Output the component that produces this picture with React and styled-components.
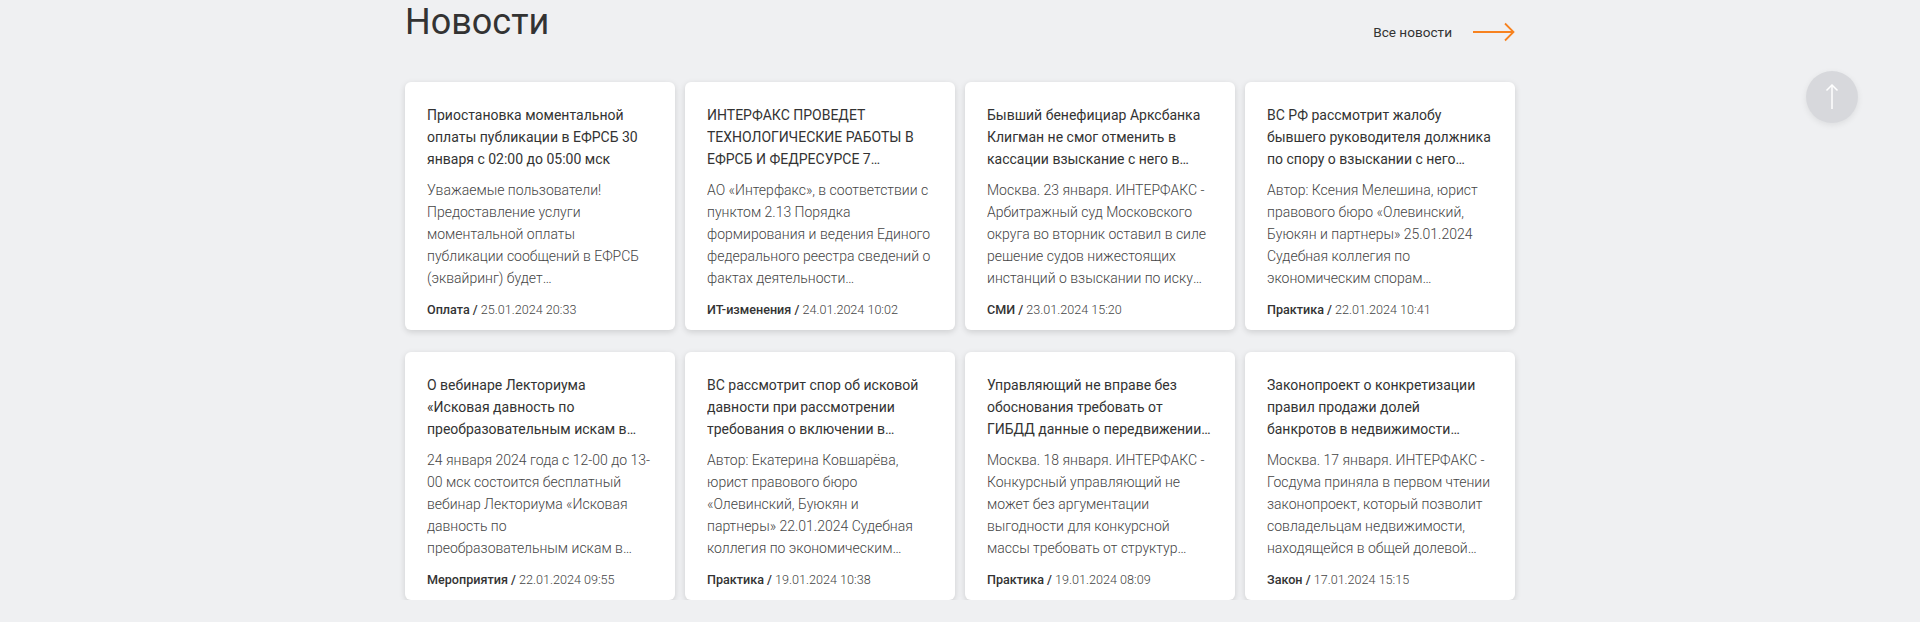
import styled, { createGlobalStyle } from "styled-components";

const news = [
  {
    title:
      "Приостановка моментальной оплаты публикации в ЕФРСБ 30 января с 02:00 до 05:00 мск",
    text: "Уважаемые пользователи! Предоставление услуги моментальной оплаты публикации сообщений в ЕФРСБ (эквайринг) будет приостановлено на время проведения технических работ.",
    tag: "Оплата",
    date: "25.01.2024 20:33",
  },
  {
    title:
      "ИНТЕРФАКС ПРОВЕДЕТ ТЕХНОЛОГИЧЕСКИЕ РАБОТЫ В ЕФРСБ И ФЕДРЕСУРСЕ 7 ФЕВРАЛЯ",
    text: "АО «Интерфакс», в соответствии с пунктом 2.13 Порядка формирования и ведения Единого федерального реестра сведений о фактах деятельности юридических лиц, уведомляет о проведении работ.",
    tag: "ИТ-изменения",
    date: "24.01.2024 10:02",
  },
  {
    title:
      "Бывший бенефициар Арксбанка Клигман не смог отменить в кассации взыскание с него в пользу банка",
    text: "Москва. 23 января. ИНТЕРФАКС - Арбитражный суд Московского округа во вторник оставил в силе решение судов нижестоящих инстанций о взыскании по иску конкурсного управляющего.",
    tag: "СМИ",
    date: "23.01.2024 15:20",
  },
  {
    title:
      "ВС РФ рассмотрит жалобу бывшего руководителя должника по спору о взыскании с него убытков",
    text: "Автор: Ксения Мелешина, юрист правового бюро «Олевинский, Буюкян и партнеры» 25.01.2024 Судебная коллегия по экономическим спорам Верховного Суда РФ рассмотрит жалобу.",
    tag: "Практика",
    date: "22.01.2024 10:41",
  },
  {
    title:
      "О вебинаре Лекториума «Исковая давность по преобразовательным искам в деле о банкротстве»",
    text: "24 января 2024 года с 12-00 до 13-00 мск состоится бесплатный вебинар Лекториума «Исковая давность по преобразовательным искам в деле о банкротстве».",
    tag: "Мероприятия",
    date: "22.01.2024 09:55",
  },
  {
    title:
      "ВС рассмотрит спор об исковой давности при рассмотрении требования о включении в реестр",
    text: "Автор: Екатерина Ковшарёва, юрист правового бюро «Олевинский, Буюкян и партнеры» 22.01.2024 Судебная коллегия по экономическим спорам Верховного Суда РФ рассмотрит спор.",
    tag: "Практика",
    date: "19.01.2024 10:38",
  },
  {
    title:
      "Управляющий не вправе без обоснования требовать от ГИБДД данные о передвижении автомобилей",
    text: "Москва. 18 января. ИНТЕРФАКС - Конкурсный управляющий не может без аргументации выгодности для конкурсной массы требовать от структур МВД сведения о передвижении.",
    tag: "Практика",
    date: "19.01.2024 08:09",
  },
  {
    title:
      "Законопроект о конкретизации правил продажи долей банкротов в недвижимости одобрен в первом чтении",
    text: "Москва. 17 января. ИНТЕРФАКС - Госдума приняла в первом чтении законопроект, который позволит совладельцам недвижимости, находящейся в общей долевой собственности, выкупить долю.",
    tag: "Закон",
    date: "17.01.2024 15:15",
  },
];

const App = () => {
  return (
    <>
      <GlobalStyle />
      <Section>
        <Header>
          <Heading>Новости</Heading>
          <AllLink href="#">
            Все новости
            <svg width="42" height="20" viewBox="0 0 42 20" fill="none">
              <path d="M0 10 H40.5" stroke="#f7821f" strokeWidth="2" />
              <path
                d="M32 1.5 L40.5 10 L32 18.5"
                stroke="#f7821f"
                strokeWidth="1.8"
              />
            </svg>
          </AllLink>
        </Header>
        <Grid>
          {news.map((item, i) => (
            <Card key={i}>
              <Title>{item.title}</Title>
              <Text>{item.text}</Text>
              <Meta>
                <Tag>{item.tag} /</Tag> {item.date}
              </Meta>
            </Card>
          ))}
        </Grid>
      </Section>
      <UpButton aria-label="Наверх">
        <svg width="14" height="26" viewBox="0 0 14 26" fill="none">
          <path d="M7 1 V25" stroke="#fff" strokeWidth="1.5" />
          <path d="M1.5 6.5 L7 1 L12.5 6.5" stroke="#fff" strokeWidth="1.5" />
        </svg>
      </UpButton>
    </>
  );
};

const GlobalStyle = createGlobalStyle`
  body {
    margin: 0;
    background: #eff0f2;
    font-family: Roboto, "Noto Sans", sans-serif;
  }
`;

export const Section = styled.div`
  width: 1110px;
  margin: 0 auto;
`;

export const Header = styled.div`
  display: flex;
  justify-content: space-between;
  align-items: flex-start;
  height: 82px;
`;

export const Heading = styled.h2`
  margin: 0;
  padding-top: 4px;
  font-size: 36px;
  line-height: 36px;
  font-weight: 400;
  color: #333;
`;

export const AllLink = styled.a`
  display: flex;
  align-items: center;
  gap: 21px;
  margin-top: 22px;
  font-size: 13.6px;
  line-height: 20px;
  color: #333;
  text-decoration: none;
`;

export const Grid = styled.div`
  display: grid;
  grid-template-columns: repeat(4, 270px);
  column-gap: 10px;
  row-gap: 22px;
`;

export const Card = styled.div`
  display: flex;
  flex-direction: column;
  height: 248px;
  box-sizing: border-box;
  padding: 22px 24px 0 22px;
  background: #fff;
  border-radius: 6px;
  box-shadow: 0 2px 6px rgba(0, 0, 0, 0.14);
`;

export const Title = styled.div`
  font-size: 14px;
  line-height: 22px;
  color: #333;
  display: -webkit-box;
  -webkit-line-clamp: 3;
  -webkit-box-orient: vertical;
  overflow: hidden;
`;

export const Text = styled.div`
  margin-top: 9px;
  font-size: 14px;
  line-height: 22px;
  font-weight: 300;
  color: #444;
  display: -webkit-box;
  -webkit-line-clamp: 5;
  -webkit-box-orient: vertical;
  overflow: hidden;
`;

export const Meta = styled.div`
  margin-top: 13px;
  font-size: 12.6px;
  line-height: 16px;
  font-weight: 300;
  color: #444;
`;

export const Tag = styled.span`
  font-weight: 500;
  color: #333;
`;

export const UpButton = styled.button`
  position: fixed;
  top: 71px;
  right: 62px;
  display: flex;
  align-items: center;
  justify-content: center;
  width: 52px;
  height: 52px;
  padding: 0;
  border: none;
  border-radius: 50%;
  background: #d7d8dc;
  box-shadow: 0 2px 6px rgba(0, 0, 0, 0.08);
  cursor: pointer;
`;

export default App;
